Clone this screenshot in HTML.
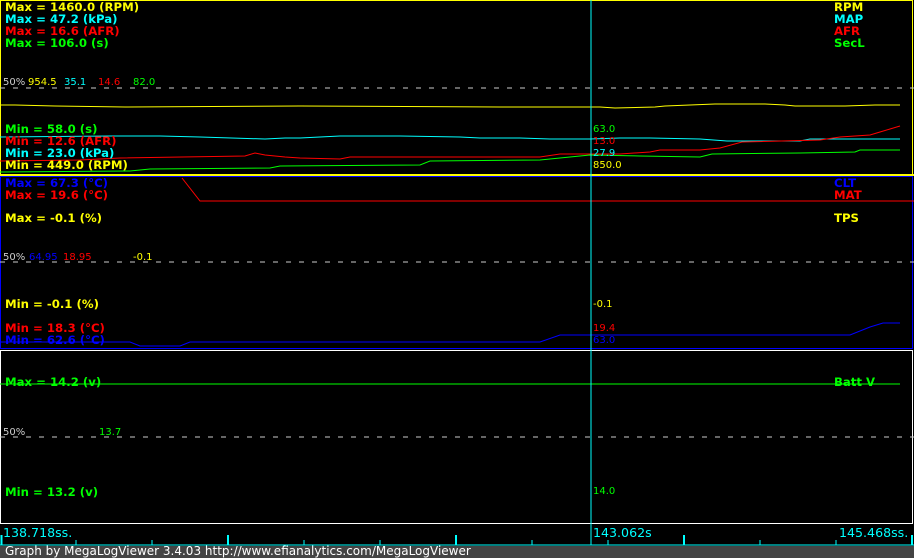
<!DOCTYPE html>
<html><head><style>
body{margin:0;width:914px;height:558px;background:#000;overflow:hidden;position:relative;font-family:"DejaVu Sans","Liberation Sans",sans-serif}
.b{position:absolute;font-weight:bold;font-size:11.7px;line-height:12px;white-space:nowrap}
.s{position:absolute;font-size:10px;line-height:11px;white-space:nowrap}
.y{color:#ff0}.c{color:#0ff}.r{color:#f00}.g{color:#0f0}.bl{color:#00f}.w{color:#ccc}
.ax{position:absolute;font-size:12px;line-height:13px;white-space:nowrap;color:#0ff;transform:scaleX(1.05);transform-origin:0 0}
</style></head><body>
<svg width="914" height="558" style="position:absolute;left:0;top:0">
<rect x="0.5" y="0.5" width="912" height="174" fill="none" stroke="#ff0" stroke-width="1"/>
<line x1="0" y1="175" x2="914" y2="175" stroke="#ff0" stroke-width="2"/>
<rect x="0.5" y="176.5" width="912" height="172" fill="none" stroke="#00f"/>
<rect x="0.5" y="350.5" width="912" height="173" fill="none" stroke="#fff"/>
<line x1="0" y1="88" x2="914" y2="88" stroke="#ccc" stroke-dasharray="5,8"/>
<line x1="0" y1="262" x2="914" y2="262" stroke="#ccc" stroke-dasharray="5,8"/>
<line x1="0" y1="437" x2="914" y2="437" stroke="#ccc" stroke-dasharray="5,8"/>
<polyline fill="none" stroke="#ff0" points="0,105 15,105 55,106 125,107 300,106 500,107 600,107 615,108 655,107 665,106 715,104 765,104 785,105 795,106 845,106 875,105 900,105"/>
<polyline fill="none" stroke="#0ff" points="0,137 110,136 160,136 200,137 265,139 285,138 300,138 340,136 400,136 460,137 480,138 520,138 550,139 590,139 620,138 650,138 700,139 727,141 800,141 810,139 900,139"/>
<polyline fill="none" stroke="#f00" points="0,161 80,160 120,158 245,156 255,153 265,155 285,157 300,158 340,159 350,157 360,157 470,157 540,157 560,154 590,154 620,154 650,152 660,150 700,150 720,148 742,142 820,140 840,137 870,135 880,132 900,126"/>
<polyline fill="none" stroke="#0f0" points="0,172 130,171 150,169 270,168 280,166 420,165 430,161 540,160 570,157 590,155 640,156 700,157 712,154 800,153 855,152 860,150 900,150"/>
<polyline fill="none" stroke="#f00" points="182,178 200,201 914,201"/>
<polyline fill="none" stroke="#00f" points="0,342 130,342 140,346 180,346 190,342 540,342 560,335 850,335 865,329 870,327 883,323 900,323"/>
<line x1="0" y1="384" x2="900" y2="384" stroke="#0f0"/>
<line x1="591" y1="0" x2="591" y2="545" stroke="#0ff"/>
<line x1="0" y1="545" x2="914" y2="545" stroke="#0ff"/>
<g stroke="#0ff">
<line x1="1.5" y1="535" x2="1.5" y2="545" stroke-width="2"/>
<line x1="76" y1="540" x2="76" y2="545"/><line x1="152" y1="540" x2="152" y2="545"/>
<line x1="228" y1="535" x2="228" y2="545" stroke-width="2"/>
<line x1="304" y1="540" x2="304" y2="545"/><line x1="380" y1="540" x2="380" y2="545"/>
<line x1="456" y1="535" x2="456" y2="545" stroke-width="2"/>
<line x1="532" y1="540" x2="532" y2="545"/><line x1="608" y1="540" x2="608" y2="545"/>
<line x1="684" y1="535" x2="684" y2="545" stroke-width="2"/>
<line x1="760" y1="540" x2="760" y2="545"/><line x1="836" y1="540" x2="836" y2="545"/>
<line x1="912" y1="535" x2="912" y2="545" stroke-width="2"/>
</g>
<rect x="0" y="546" width="914" height="12" fill="#444"/>
</svg>
<div class="b y" style="left:5px;top:1px">Max = 1460.0 (RPM)</div>
<div class="b c" style="left:5px;top:13px">Max = 47.2 (kPa)</div>
<div class="b r" style="left:5px;top:25px">Max = 16.6 (AFR)</div>
<div class="b g" style="left:5px;top:37px">Max = 106.0 (s)</div>
<div class="b y" style="left:834px;top:1px">RPM</div>
<div class="b c" style="left:834px;top:13px">MAP</div>
<div class="b r" style="left:834px;top:25px">AFR</div>
<div class="b g" style="left:834px;top:37px">SecL</div>
<div class="s w" style="left:3px;top:77px">50%</div>
<div class="s y" style="left:28px;top:77px">954.5</div>
<div class="s c" style="left:64px;top:77px">35.1</div>
<div class="s r" style="left:98px;top:77px">14.6</div>
<div class="s g" style="left:133px;top:77px">82.0</div>
<div class="b g" style="left:5px;top:123px">Min = 58.0 (s)</div>
<div class="b r" style="left:5px;top:135px">Min = 12.6 (AFR)</div>
<div class="b c" style="left:5px;top:147px">Min = 23.0 (kPa)</div>
<div class="b y" style="left:5px;top:159px">Min = 449.0 (RPM)</div>
<div class="s g" style="left:593px;top:124px">63.0</div>
<div class="s r" style="left:593px;top:136px">13.0</div>
<div class="s c" style="left:593px;top:148px">27.9</div>
<div class="s y" style="left:593px;top:160px">850.0</div>
<div class="b bl" style="left:5px;top:177px">Max = 67.3 (°C)</div>
<div class="b r" style="left:5px;top:189px">Max = 19.6 (°C)</div>
<div class="b y" style="left:5px;top:212px">Max = -0.1 (%)</div>
<div class="b bl" style="left:834px;top:177px">CLT</div>
<div class="b r" style="left:834px;top:189px">MAT</div>
<div class="b y" style="left:834px;top:212px">TPS</div>
<div class="s w" style="left:3px;top:252px">50%</div>
<div class="s bl" style="left:29px;top:252px">64.95</div>
<div class="s r" style="left:63px;top:252px">18.95</div>
<div class="s y" style="left:133px;top:252px">-0.1</div>
<div class="b y" style="left:5px;top:298px">Min = -0.1 (%)</div>
<div class="b r" style="left:5px;top:322px">Min = 18.3 (°C)</div>
<div class="b bl" style="left:5px;top:334px">Min = 62.6 (°C)</div>
<div class="s y" style="left:593px;top:299px">-0.1</div>
<div class="s r" style="left:593px;top:323px">19.4</div>
<div class="s bl" style="left:593px;top:335px">63.0</div>
<div class="b g" style="left:5px;top:376px">Max = 14.2 (v)</div>
<div class="b g" style="left:834px;top:376px">Batt V</div>
<div class="s w" style="left:3px;top:427px">50%</div>
<div class="s g" style="left:99px;top:427px">13.7</div>
<div class="b g" style="left:5px;top:486px">Min = 13.2 (v)</div>
<div class="s g" style="left:593px;top:486px">14.0</div>
<div class="ax" style="left:3px;top:527px">138.718ss.</div>
<div class="ax" style="left:593px;top:527px">143.062s</div>
<div class="ax" style="left:839px;top:527px">145.468ss.</div>
<div style="position:absolute;left:5px;top:545px;color:#fff;font-size:12px;line-height:13px;white-space:nowrap">Graph by MegaLogViewer 3.4.03 http://www.efianalytics.com/MegaLogViewer</div>
</body></html>
